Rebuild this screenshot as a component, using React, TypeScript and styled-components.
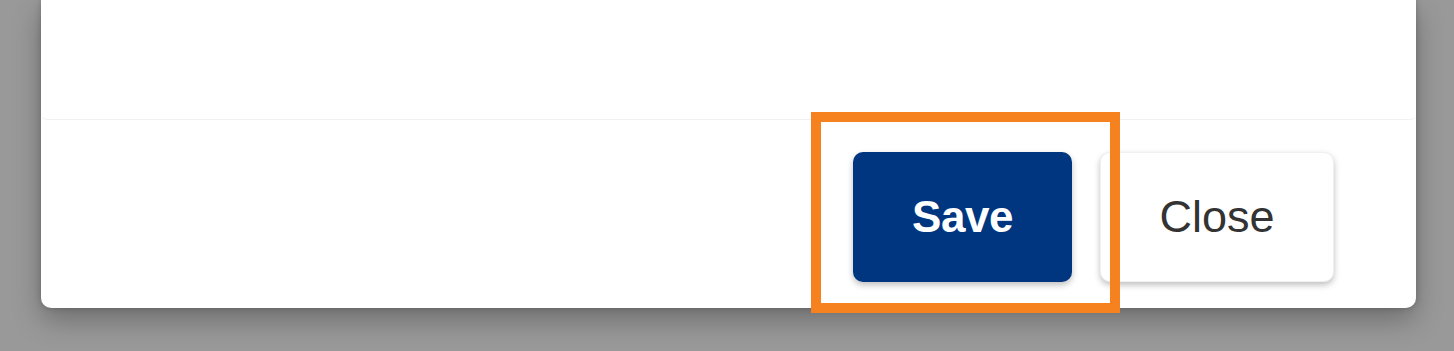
import React from "react";
import styled, { createGlobalStyle } from "styled-components";

const GlobalStyle = createGlobalStyle`
  html, body {
    margin: 0;
    padding: 0;
    background: #999999;
    font-family: "Liberation Sans", Arial, sans-serif;
  }
  body {
    width: 1454px;
    height: 351px;
    overflow: hidden;
  }
`;

const Backdrop = styled.div`
  width: 1454px;
  height: 351px;
  background: #999999;
  padding-left: 41px;
  box-sizing: border-box;
`;

const Dialog = styled.div`
  width: 1375px;
  height: 308px;
  background: #ffffff;
  border-radius: 0 0 10px 10px;
  box-shadow: 0 12px 28px rgba(0, 0, 0, 0.28), 0 0 6px rgba(0, 0, 0, 0.2);
  display: flex;
  flex-direction: column;
`;

const Body = styled.div`
  height: 120px;
  box-sizing: border-box;
  border-bottom: 1px solid #f1f1f1;
  border-radius: 0 0 6px 6px;
`;

const Footer = styled.div`
  display: flex;
  justify-content: flex-end;
  align-items: flex-start;
  gap: 28px;
  padding: 32px 82px 0 0;
`;

const Highlight = styled.div`
  position: relative;
`;

const Frame = styled.div`
  position: absolute;
  left: -42px;
  top: -40px;
  right: -48px;
  bottom: -31px;
  border: 10px solid #f5821f;
  pointer-events: none;
`;

const Button = styled.button<{ $primary?: boolean }>`
  height: 130px;
  width: ${(p) => (p.$primary ? "219px" : "234px")};
  border-radius: 10px;
  border: ${(p) => (p.$primary ? "none" : "1px solid #f0f0f0")};
  background: ${(p) => (p.$primary ? "#003580" : "#ffffff")};
  color: ${(p) => (p.$primary ? "#ffffff" : "#333333")};
  font-family: "Liberation Sans", Arial, sans-serif;
  font-weight: ${(p) => (p.$primary ? 700 : 400)};
  font-size: ${(p) => (p.$primary ? "44px" : "45px")};
  letter-spacing: ${(p) => (p.$primary ? "-0.5px" : "0")};
  box-shadow: 0 3px 6px rgba(0, 0, 0, 0.25);
  cursor: pointer;
  padding: 0;
`;

export default function App() {
  return (
    <>
      <GlobalStyle />
      <Backdrop>
        <Dialog>
          <Body />
          <Footer>
            <Highlight>
              <Button $primary>Save</Button>
              <Frame />
            </Highlight>
            <Button>Close</Button>
          </Footer>
        </Dialog>
      </Backdrop>
    </>
  );
}
